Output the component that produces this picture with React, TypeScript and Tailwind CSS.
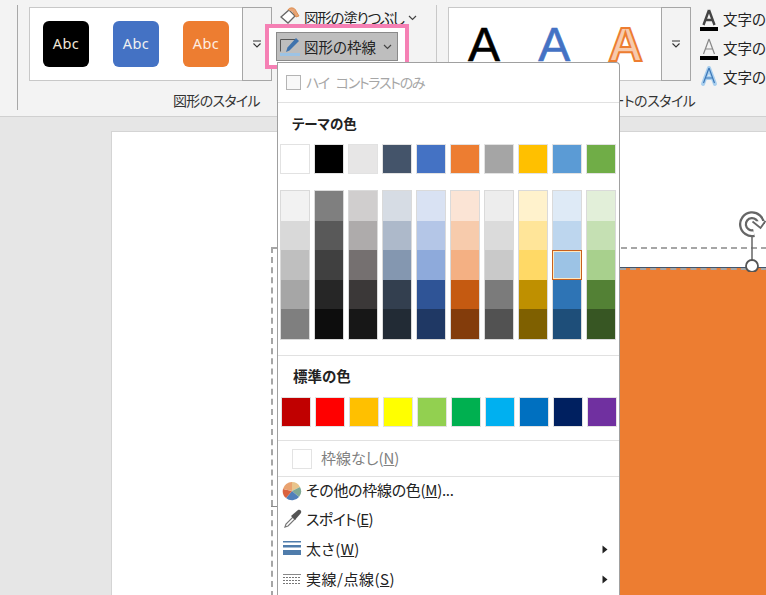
const theme = ["#ffffff","#000000","#e7e6e6","#44546a","#4472c4","#ed7d31","#a5a5a5","#ffc000","#5b9bd5","#70ad47"];
const shades = [
  ["#f2f2f2","#d9d9d9","#bfbfbf","#a6a6a6","#7f7f7f"],
  ["#7f7f7f","#595959","#404040","#262626","#0d0d0d"],
  ["#d0cece","#aeabab","#757070","#3b3838","#171717"],
  ["#d6dce4","#adb9ca","#8497b0","#333f4f","#222b35"],
  ["#d9e2f3","#b4c6e7","#8eaadb","#2f5496","#1f3864"],
  ["#fbe4d5","#f7cbac","#f4b083","#c55a11","#833c0b"],
  ["#ededed","#dbdbdb","#c9c9c9","#7b7b7b","#525252"],
  ["#fff2cc","#ffe599","#ffd966","#bf9000","#7f6000"],
  ["#deeaf6","#bdd6ee","#9cc3e5","#2e74b5","#1e4e79"],
  ["#e2efd9","#c5e0b3","#a8d08d","#538135","#375623"],
];
const standard = ["#c00000","#ff0000","#ffc000","#ffff00","#92d050","#00b050","#00b0f0","#0070c0","#002060","#7030a0"];

function Chevron() {
  return (
    <svg width="9" height="6" viewBox="0 0 9 6" className="shrink-0">
      <path d="M1 1l3.5 3.5L8 1" fill="none" stroke="#444" strokeWidth="1.2" />
    </svg>
  );
}

function MoreButton() {
  return (
    <div className="w-[30px] h-[74px] shrink-0 border border-[#a6a6a6] flex items-center justify-center bg-[#f3f3f3]">
      <svg width="10" height="8" viewBox="0 0 10 8">
        <path d="M1 1h8" stroke="#333" strokeWidth="1" />
        <path d="M1.5 3.5L5 7l3.5-3.5" fill="none" stroke="#333" strokeWidth="1.1" />
      </svg>
    </div>
  );
}

function Tile({ color, mark }: { color: string; mark: string }) {
  return (
    <div className="w-[46px] h-[46px] rounded-md flex items-center justify-center text-[14.5px] font-['Noto_Sans'] tracking-[0.4px]" style={{ background: color, color: mark }}>
      Abc
    </div>
  );
}

function TextA({ kind }: { kind: 0 | 1 | 2 }) {
  return (
    <svg width="18" height="24" viewBox="0 0 18 24" className="shrink-0">
      {kind === 2 ? (
        <path d="M9 3L3 19M9 3l6 16M5 13h8" fill="none" stroke="#a9cfee" strokeWidth="4" strokeLinecap="round" />
      ) : null}
      <path
        d="M9 3L3.5 18M9 3l5.5 15M5.5 13h7"
        fill="none"
        stroke={kind === 0 ? "#444" : kind === 1 ? "#888" : "#3d78b8"}
        strokeWidth={kind === 0 ? 2.4 : 1.2}
      />
      {kind < 2 ? <rect x="0" y="20" width="18" height="4" fill="#000" /> : null}
    </svg>
  );
}

function Swatch({ color }: { color: string }) {
  return <div className="w-[30px] h-[30px] border border-[#e2e2e2]" style={{ background: color }} />;
}

function MenuRow({ icon, label, arrow, h }: { icon: React.ReactNode; label: React.ReactNode; arrow?: boolean; h: string }) {
  return (
    <div className={`flex items-center pl-[4px] pr-[11px] text-[15px] text-[#222] ${h}`}>
      <div className="w-[24px] flex justify-start">{icon}</div>
      <span className="flex-1">{label}</span>
      {arrow ? (
        <svg width="6" height="9" viewBox="0 0 6 9"><path d="M0.5 0.5L5.5 4.5L0.5 8.5z" fill="#222" /></svg>
      ) : null}
    </div>
  );
}

export default function App() {
  return (
    <div className="relative w-[766px] h-[595px] overflow-hidden bg-[#e6e6e6] font-['Noto_Sans_CJK_JP',sans-serif] [font-feature-settings:'palt'] text-[#222]">
      {/* Ribbon */}
      <div className="h-[117px] bg-[#f3f3f3] border-b border-[#d0d0d0] flex pl-[17px] pt-[5px]">
        <div className="w-px h-[105px] shrink-0 bg-[#a8a8a8]" />
        <div className="w-[418px] shrink-0 flex flex-col">
          <div className="flex pl-[11px] pt-[2px] h-[86px]">
            <div className="w-[213px] h-[74px] bg-white border border-[#c8c8c8] border-r-0 flex items-center pl-[13px] gap-[24px]">
              <Tile color="#000000" mark="#f0e6d8" />
              <Tile color="#4472c4" mark="#f0f0f0" />
              <Tile color="#ed7d31" mark="#fdeee2" />
            </div>
            <MoreButton />
            <div className="ml-[6px] h-[22px] flex items-center text-[14.5px]">
              <svg width="24" height="20" viewBox="0 0 24 20" className="mr-[2px] -mt-[5px] shrink-0">
                <path d="M3 11l8-7 6 6-7 7z" fill="#fff" stroke="#666" strokeWidth="1.3" />
                <path d="M10 4c1-3 7-3 8 1l3 5-3 1-3-5" fill="#e8a577" stroke="#d9843f" strokeWidth="0.8" />
              </svg>
              <span className="w-[104px] whitespace-nowrap tracking-[-1.2px]">図形の塗りつぶし</span>
              <Chevron />
            </div>
          </div>
          <div className="text-[14px] text-center pl-[1px] pr-[20px] leading-[20px] text-[#333] -mt-[1px] w-[416px]">
            <span className="inline-block tracking-[-0.7px]">図形のスタイル</span>
          </div>
        </div>
        <div className="w-px h-[105px] shrink-0 bg-[#c8c8c8]" />
        <div className="flex flex-col flex-1 min-w-0">
          <div className="flex pl-[11px] pt-[2px] h-[86px]">
            <div className="w-[213px] h-[74px] shrink-0 bg-white border border-[#c8c8c8] border-r-0 flex justify-between pl-[19px] pr-[18px] pt-[8px] text-[48px] leading-[58px] font-['Liberation_Sans'] overflow-hidden">
              <span className="text-black [-webkit-text-stroke:0.6px_#000]">A</span>
              <span className="text-[#4472c4] [-webkit-text-stroke:0.6px_#4472c4]">A</span>
              <span className="font-bold text-[#f7caac] [-webkit-text-stroke:2px_#ed7d31]">A</span>
            </div>
            <MoreButton />
            <div className="ml-[9px] flex flex-col gap-[5px] text-[14.5px] whitespace-nowrap shrink-0">
              <div className="flex items-center gap-[5px] h-[24px]"><TextA kind={0} /><span>文字の塗りつぶし</span></div>
              <div className="flex items-center gap-[5px] h-[24px]"><TextA kind={1} /><span>文字の輪郭</span></div>
              <div className="flex items-center gap-[5px] h-[24px]"><TextA kind={2} /><span>文字の効果</span></div>
            </div>
          </div>
          <div className="text-[14px] leading-[20px] text-[#333] -mt-[1px] pl-[126px] tracking-[-0.5px] whitespace-nowrap">ワードアートのスタイル</div>
        </div>
      </div>

      {/* Slide canvas */}
      <div className="absolute left-[111px] top-[131px] w-[655px] h-[464px] bg-white border-l border-t border-[#d4d4d4]">
        <div className="absolute left-[508px] top-[135px] w-[147px] h-[330px] bg-[#ed7d31] border-t border-[#44546a]" />
        <div className="absolute left-[159px] top-[115px] w-[496px] border-t-2 border-dashed border-[#a6a6a6]" />
        <div className="absolute left-[508px] top-[136px] w-[147px] border-t-2 border-dashed border-[#a6a6a6]" />
        <div className="absolute left-[159px] top-[115px] h-[350px] border-l-2 border-dashed border-[#a6a6a6]" />
        <div className="absolute left-[159px] top-[374px] w-[6px] h-[1px] bg-[#8a8a8a]" />
        <svg className="absolute left-[626px] top-[78px]" width="28" height="62" viewBox="0 0 28 62">
          <path d="M14 24v26" stroke="#666" strokeWidth="1.500" />
          <path d="M16 23A9 9 0 1 1 23 14" fill="none" stroke="#666" strokeWidth="8" />
          <path d="M16 23A9 9 0 1 1 23 14" fill="none" stroke="#fff" strokeWidth="3.4" />
          <path d="M14.500 11.500l8 6.500 5-7" fill="#fff" stroke="#666" strokeWidth="1.800" />
          <circle cx="14" cy="56" r="6" fill="#fff" stroke="#555" strokeWidth="1.800" />
        </svg>
      </div>

      {/* Highlighted button */}
      <div className="absolute left-[265px] top-[24px] w-[144px] h-[45px] border-[4px] border-[#f580b4] bg-white flex items-center pl-[7px]">
        <div className="w-[122px] h-[29px] bg-[#bebebe] border border-[#8a8a8a] flex items-center text-[14.5px] pl-[1px]">
          <svg width="24" height="24" viewBox="0 0 24 24" className="mr-[2px] shrink-0">
            <path d="M2.5 4.500h15M2.500 4.500v12" stroke="#555" strokeWidth="1" fill="none" />
            <rect x="2" y="18" width="20" height="3" fill="#9cc3e5" />
            <path d="M8 17l1.500-4.500L18 3l3 3-9.500 9.500z" fill="#3f73ad" />
          </svg>
          <span className="mr-[7px]">図形の枠線</span>
          <Chevron />
        </div>
      </div>

      {/* Dropdown menu */}
      <div className="absolute left-[277px] top-[62px] w-[343px] h-[533px] bg-white border border-b-0 border-[#a0a0a0] rounded-tr-[4px] overflow-hidden">
        <div className="h-[40px] border-b border-[#e1e1e1] flex items-center pl-[8px] gap-[5px] text-[14px] text-[#a6a6a6]">
          <div className="w-[15px] h-[15px] border border-[#b4b4b4] bg-[#f8f8f8]" />
          <span className="tracking-[-1.3px] [word-spacing:5px]">ハイ コントラストのみ</span>
        </div>
        <div className="pl-[14px] pt-[10px] h-[30px] text-[13.5px] font-bold leading-[20px]">テーマの色</div>
        <div className="pl-[2px] mt-[11px] flex gap-[4px]">
          {theme.map((c) => <Swatch key={c} color={c} />)}
        </div>
        <div className="pl-[2px] mt-[16px] flex gap-[4px]">
          {shades.map((col, i) => (
            <div key={i} className="w-[30px] h-[150px] border border-[#dadada] flex flex-col">
              {col.map((c, j) => (
                <div
                  key={c + j}
                  className={i === 8 && j === 2
                    ? "h-[30px] -mx-px relative [box-shadow:inset_0_0_0_1px_#c8601c,inset_0_0_0_2px_#fde9c0]"
                    : "h-[30px]"}
                  style={{ background: c }}
                />
              ))}
            </div>
          ))}
        </div>
        <div className="mt-[15px] border-b border-[#e1e1e1]" />
        <div className="pl-[15px] pt-[10px] h-[30px] text-[14.5px] font-bold leading-[20px]">標準の色</div>
        <div className="pl-[3px] mt-[11px] flex gap-[4px]">
          {standard.map((c) => <Swatch key={c} color={c} />)}
        </div>
        <div className="mt-[13px] border-b border-[#e1e1e1]" />
        <div className="h-[36px] border-b border-[#e1e1e1] flex items-center pl-[14px] text-[15px] text-[#808080]">
          <div className="w-[20px] h-[20px] border border-[#e3e3e3] mr-[9px]" />
          <span>枠線なし(<span className="underline">N</span>)</span>
        </div>
        <MenuRow
          h="h-[27px]"
          label={<span className="tracking-[-0.3px]">その他の枠線の色(<span className="underline">M</span>)...</span>}
          icon={
            <svg width="20" height="20" viewBox="0 0 20 20">
              <path d="M10 10L10 1A9 9 0 0 1 18 6z" fill="#e9c48b" />
              <path d="M10 10L18 6A9 9 0 0 1 17 16z" fill="#7fa894" />
              <path d="M10 10L17 16A9 9 0 0 1 4 17z" fill="#4f7fba" />
              <path d="M10 10L4 17A9 9 0 0 1 1 8z" fill="#d9623f" />
              <path d="M10 10L1 8A9 9 0 0 1 10 1z" fill="#e9a26f" />
            </svg>
          }
        />
        <MenuRow
          h="h-[30px]"
          label={<span className="tracking-[-0.7px]">スポイト(<span className="underline">E</span>)</span>}
          icon={
            <svg width="20" height="20" viewBox="0 0 20 20" className="ml-[1px]">
              <path d="M2 18l1-3 7-7 2 2-7 7z" fill="#fff" stroke="#777" strokeWidth="1.2" />
              <path d="M8 7l7-6c2-1 4 1 3 3l-6 7z" fill="#555" />
            </svg>
          }
        />
        <MenuRow
          h="h-[30px]"
          label={<span className="tracking-[0.4px]">太さ(<span className="underline">W</span>)</span>}
          arrow
          icon={
            <svg width="19" height="18" viewBox="0 0 19 18" className="ml-[1px]">
              <rect y="1" width="18" height="1.5" fill="#4f7cab" />
              <rect y="5" width="18" height="2.5" fill="#4f7cab" />
              <rect y="10" width="18" height="5" fill="#4f7cab" />
            </svg>
          }
        />
        <MenuRow
          h="h-[30px]"
          label={<span className="tracking-[0.5px]">実線/点線(<span className="underline">S</span>)</span>}
          arrow
          icon={
            <svg width="19" height="12" viewBox="0 0 19 12" className="ml-[1px]">
              <path d="M0 1.500h18" stroke="#888" strokeWidth="1" />
              <path d="M0 4.500h18M0 7.500h18M0 10.500h18" stroke="#777" strokeWidth="1" strokeDasharray="2 1" />
            </svg>
          }
        />
      </div>
    </div>
  );
}
